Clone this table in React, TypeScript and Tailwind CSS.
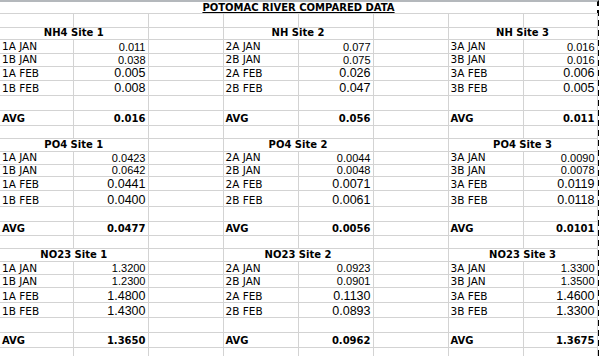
import React from 'react';

type Site = { title: string; rows: [string, string][]; avg: string };
type Section = { heights: number[]; sites: Site[] };

// 시트 데이터: 섹션마다 사이트 3개
const sections: Section[] = [
  {
    // header, 4 rows, blank, avg, spacer
    heights: [12, 14, 13, 14, 15, 15, 15, 13],
    sites: [
      { title: 'NH4 Site 1', rows: [['1A JAN', '0.011'], ['1B JAN', '0.038'], ['1A FEB', '0.005'], ['1B FEB', '0.008']], avg: '0.016' },
      { title: 'NH Site 2', rows: [['2A JAN', '0.077'], ['2B JAN', '0.075'], ['2A FEB', '0.026'], ['2B FEB', '0.047']], avg: '0.056' },
      { title: 'NH Site 3', rows: [['3A JAN', '0.016'], ['3B JAN', '0.016'], ['3A FEB', '0.006'], ['3B FEB', '0.005']], avg: '0.011' },
    ],
  },
  {
    heights: [13, 13, 12, 14, 16, 15, 14, 13],
    sites: [
      { title: 'PO4 Site 1', rows: [['1A JAN', '0.0423'], ['1B JAN', '0.0642'], ['1A FEB', '0.0441'], ['1B FEB', '0.0400']], avg: '0.0477' },
      { title: 'PO4 Site 2', rows: [['2A JAN', '0.0044'], ['2B JAN', '0.0048'], ['2A FEB', '0.0071'], ['2B FEB', '0.0061']], avg: '0.0056' },
      { title: 'PO4 Site 3', rows: [['3A JAN', '0.0090'], ['3B JAN', '0.0078'], ['3A FEB', '0.0119'], ['3B FEB', '0.0118']], avg: '0.0101' },
    ],
  },
  {
    heights: [13, 13, 13, 15, 15, 15, 15, 12],
    sites: [
      { title: 'NO23 Site 1', rows: [['1A JAN', '1.3200'], ['1B JAN', '1.2300'], ['1A FEB', '1.4800'], ['1B FEB', '1.4300']], avg: '1.3650' },
      { title: 'NO23 Site 2', rows: [['2A JAN', '0.0923'], ['2B JAN', '0.0901'], ['2A FEB', '0.1130'], ['2B FEB', '0.0893']], avg: '0.0962' },
      { title: 'NO23 Site 3', rows: [['3A JAN', '1.3300'], ['3B JAN', '1.3500'], ['3A FEB', '1.4600'], ['3B FEB', '1.3300']], avg: '1.3675' },
    ],
  },
];

const verdana = 'font-["DejaVu_Sans",Verdana,sans-serif]';
const helv = 'font-["Liberation_Sans",Arial,sans-serif]';
const cell = 'border-r border-b border-[#d3d3d3] p-0 align-bottom leading-none whitespace-nowrap overflow-hidden';

function EmptyCells({ count }: { count: number }) {
  return (
    <>
      {Array.from({ length: count }).map((_, i) => (
        <td key={i} className={cell} />
      ))}
    </>
  );
}

function SectionRows({ section }: { section: Section }) {
  const h = section.heights;
  return (
    <>
      {/* 사이트 제목 */}
      <tr style={{ height: h[0] }}>
        {section.sites.map((site, i) => (
          <React.Fragment key={site.title}>
            <td colSpan={2} className={`${cell} ${verdana} text-center text-[10px] font-bold pb-[1px]`}>
              {site.title}
            </td>
            {i < 2 && <td className={cell} />}
          </React.Fragment>
        ))}
      </tr>
      {/* 측정값 */}
      {[0, 1, 2, 3].map((r) => (
        <tr key={r} style={{ height: h[r + 1] }}>
          {section.sites.map((site, i) => (
            <React.Fragment key={site.title}>
              <td className={`${cell} ${verdana} text-[10.5px] pl-[2px] pb-[1px]`}>{site.rows[r][0]}</td>
              <td className={`${cell} ${helv} text-right pr-[2px] ${r >= 2 ? 'text-[12.5px]' : 'text-[11px]'}`}>
                {site.rows[r][1]}
              </td>
              {i < 2 && <td className={cell} />}
            </React.Fragment>
          ))}
        </tr>
      ))}
      <tr style={{ height: h[5] }}>
        <EmptyCells count={8} />
      </tr>
      {/* 평균 */}
      <tr style={{ height: h[6] }}>
        {section.sites.map((site, i) => (
          <React.Fragment key={site.title}>
            <td className={`${cell} ${verdana} text-[10px] font-bold pl-[2px] pb-[1px]`}>AVG</td>
            <td className={`${cell} ${verdana} text-[10px] font-bold text-right pr-[2px] pb-[1px]`}>{site.avg}</td>
            {i < 2 && <td className={cell} />}
          </React.Fragment>
        ))}
      </tr>
      <tr style={{ height: h[7] }}>
        <EmptyCells count={8} />
      </tr>
    </>
  );
}

export default function App() {
  const widths = [73, 75, 75, 75, 75, 75, 75, 74];
  return (
    <div className="w-[599px] h-[356px] overflow-hidden bg-white text-black">
      <div className="w-[599px] border-t-2 border-[#b4b8bc] border-r-2 border-r-black border-dashed h-[356px]" style={{ borderTopStyle: 'solid' }}>
        <table className="table-fixed border-collapse w-[597px]">
          <colgroup>
            {widths.map((w, i) => (
              <col key={i} style={{ width: w }} />
            ))}
          </colgroup>
          <tbody>
            <tr className="h-[11px]">
              <td colSpan={8} className={`border-b border-[#d3d3d3] p-0 align-bottom leading-none text-center ${verdana} text-[10px] font-bold underline`}>
                POTOMAC RIVER COMPARED DATA
              </td>
            </tr>
            <tr className="h-[14px]">
              <EmptyCells count={8} />
            </tr>
            {sections.map((s, i) => (
              <SectionRows key={i} section={s} />
            ))}
          </tbody>
        </table>
      </div>
    </div>
  );
}
